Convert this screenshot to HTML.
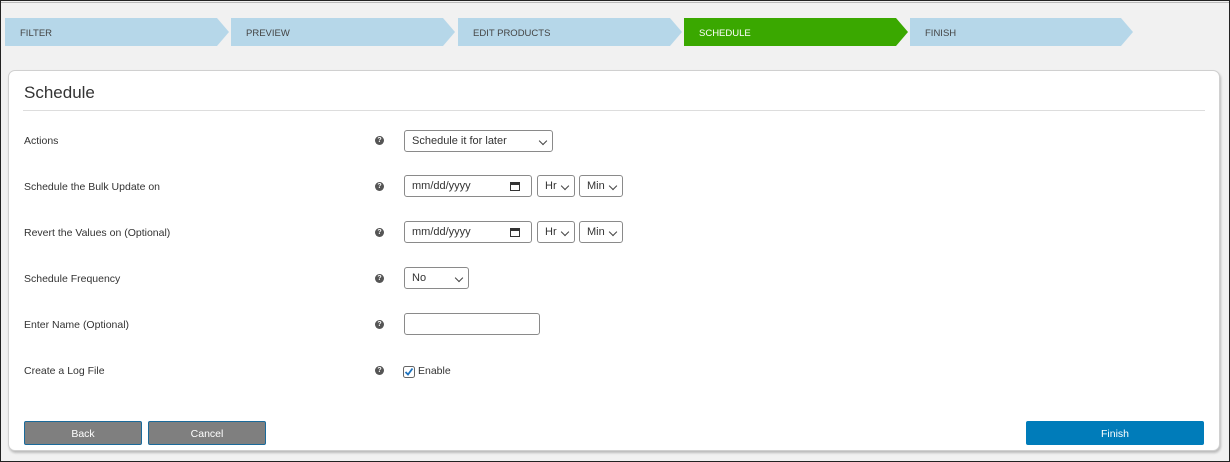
<!DOCTYPE html>
<html><head><style>
*{box-sizing:border-box;margin:0;padding:0}
body{width:1230px;height:462px;background:#f1f1f1;font-family:"Liberation Sans",sans-serif;font-size:10.5px;color:#333;position:relative;overflow:hidden}
.frame{position:absolute;left:0;top:0;width:1230px;height:462px;border:1px solid #222;pointer-events:none}
.topl{position:absolute;left:0;top:2px;width:1230px;height:1px;background:#bbb}
.step{position:absolute;top:28px;font-size:9.5px;color:#444}
.panel{position:absolute;left:8px;top:70px;width:1212px;height:381px;background:#fff;border:1px solid #d0d0d0;border-radius:7px;box-shadow:1px 2px 2px #bbb}
h2{position:absolute;left:15px;top:12px;font-weight:normal;font-size:17px;color:#333}
.hr{position:absolute;left:14px;right:14px;top:39px;height:1px;background:#ddd}
.lbl{position:absolute;left:15px;font-size:10.5px;color:#333}
.q{position:absolute;left:366px;width:9px;height:9px;border-radius:50%;background:#555;color:#fff;font-size:7px;font-weight:bold;text-align:center;line-height:9px}
.box{position:absolute;border:1px solid #8a8a8a;border-radius:3px;background:#fff;height:22px;font-size:11px;color:#333;line-height:20px;padding-left:7px}
.chev{position:absolute;right:6px;top:7px;width:6px;height:6px;border-right:1.3px solid #444;border-bottom:1.3px solid #444;transform:rotate(45deg)}
.cal{position:absolute;right:11px;top:6px;width:10px;height:9px;border:1.5px solid #333;border-top-width:3px}
.btn{position:absolute;top:350px;height:24px;color:#fff;font-size:10.5px;text-align:center;line-height:24px;border:1px solid #1a6a9a;border-radius:2px}
</style></head><body>
<div class="topl"></div>
<svg style="position:absolute;left:0;top:0" width="1230" height="60">
<polygon points="5,18 217,18 229,32 217,46 5,46" fill="#b6d7e9"/>
<polygon points="231,18 443,18 455,32 443,46 231,46" fill="#b6d7e9"/>
<polygon points="458,18 670,18 682,32 670,46 458,46" fill="#b6d7e9"/>
<polygon points="684,18 896,18 908,32 896,46 684,46" fill="#3aa800"/>
<polygon points="910,18 1121,18 1133,32 1121,46 910,46" fill="#b6d7e9"/>
</svg>
<div class="step" style="left:20px">FILTER</div>
<div class="step" style="left:246px">PREVIEW</div>
<div class="step" style="left:473px">EDIT PRODUCTS</div>
<div class="step" style="left:699px;color:#fff">SCHEDULE</div>
<div class="step" style="left:925px">FINISH</div>
<div class="panel">
<h2>Schedule</h2><div class="hr"></div>
<div class="lbl" style="top:64px">Actions</div>
<div class="lbl" style="top:110px">Schedule the Bulk Update on</div>
<div class="lbl" style="top:156px">Revert the Values on (Optional)</div>
<div class="lbl" style="top:202px">Schedule Frequency</div>
<div class="lbl" style="top:248px">Enter Name (Optional)</div>
<div class="lbl" style="top:294px">Create a Log File</div>
<div class="q" style="top:65px">?</div>
<div class="q" style="top:111px">?</div>
<div class="q" style="top:157px">?</div>
<div class="q" style="top:203px">?</div>
<div class="q" style="top:249px">?</div>
<div class="q" style="top:295px">?</div>
<div class="box" style="left:395px;top:59px;width:149px">Schedule it for later<span class="chev"></span></div>
<div class="box" style="left:395px;top:104px;width:128px">mm/dd/yyyy<span class="cal"></span></div>
<div class="box" style="left:528px;top:104px;width:38px">Hr<span class="chev"></span></div>
<div class="box" style="left:570px;top:104px;width:44px">Min<span class="chev"></span></div>
<div class="box" style="left:395px;top:150px;width:128px">mm/dd/yyyy<span class="cal"></span></div>
<div class="box" style="left:528px;top:150px;width:38px">Hr<span class="chev"></span></div>
<div class="box" style="left:570px;top:150px;width:44px">Min<span class="chev"></span></div>
<div class="box" style="left:395px;top:196px;width:65px">No<span class="chev"></span></div>
<div class="box" style="left:395px;top:242px;width:136px"></div>
<svg style="position:absolute;left:394px;top:295px" width="12" height="12"><rect x="0.5" y="0.5" width="11" height="11" rx="2" fill="#fff" stroke="#666"/><path d="M2.5 6 L5 8.5 L9.5 2.5" fill="none" stroke="#1e73be" stroke-width="1.8"/></svg>
<div class="lbl" style="left:409px;top:294px">Enable</div>
<div class="btn" style="left:15px;width:118px;background:#7f7f7f">Back</div>
<div class="btn" style="left:139px;width:118px;background:#7f7f7f">Cancel</div>
<div class="btn" style="left:1017px;width:178px;background:#007cba;border-color:#007cba">Finish</div>
</div>
<div class="frame"></div>
</body></html>
